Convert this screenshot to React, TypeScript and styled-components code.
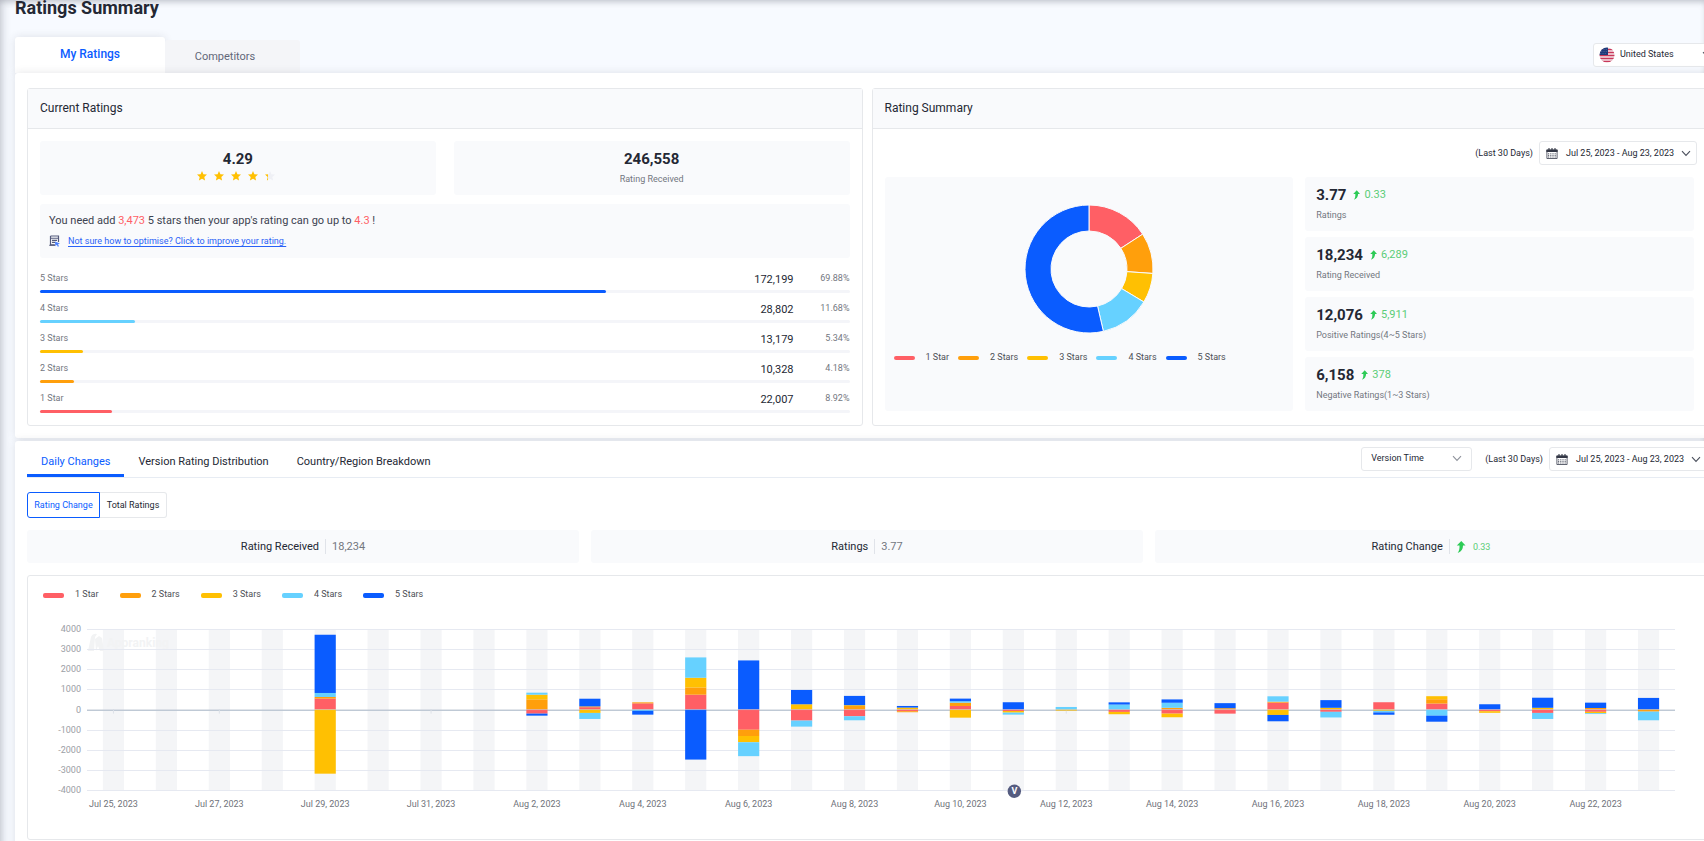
import React from "react";
import styled, { createGlobalStyle } from "styled-components";

const COLORS = {
  red: "#ff5f65",
  orange: "#ff9f0c",
  yellow: "#ffc002",
  cyan: "#66d1ff",
  blue: "#0a5cff",
  ink: "#242834",
  text: "#3c4250",
  muted: "#73777f",
  soft: "#f9fafc",
  line: "#e6e8eb",
  green: "#2dcb56",
};

const GlobalStyle = createGlobalStyle`
  *, *::before, *::after { box-sizing: border-box; }
  html { overflow: hidden; }
  body {
    margin: 0;
    background: #f7faff;
    color: ${COLORS.ink};
    font-family: Roboto, "Liberation Sans", sans-serif;
    font-size: 9px;
    line-height: 14px;
  }
  button, select { font: inherit; color: inherit; }
  h1, h2, p, ul { margin: 0; padding: 0; font-weight: inherit; }
  svg { flex: none; }
`;

const Page = styled.div`
  min-height: 100vh;
  padding-left: 15px;
  overflow: hidden;
  box-shadow: inset 5px 0 9px -2px rgba(40, 44, 60, 0.18), inset 0 4px 6px -2px rgba(40, 44, 60, 0.2);
`;

const Content = styled.main`
  margin-right: -15px;
`;

const Title = styled.h1`
  font-size: 18px;
  line-height: 16px;
  font-weight: 700;
`;

const TopBar = styled.div`
  display: flex;
  align-items: flex-end;
  height: 57px;
`;

const MainTab = styled.button<{ $active?: boolean }>`
  border: 0;
  cursor: pointer;
  width: ${(p) => (p.$active ? 150 : 135)}px;
  height: ${(p) => (p.$active ? 36 : 33)}px;
  padding: ${(p) => (p.$active ? "0 0 2px" : "0 15px 0 0")};
  border-radius: 3px 3px 0 0;
  background: ${(p) => (p.$active ? "#fff" : "#f4f5f8")};
  color: ${(p) => (p.$active ? COLORS.blue : "#626779")};
  font-size: ${(p) => (p.$active ? 12 : 11)}px;
  font-weight: ${(p) => (p.$active ? 500 : 400)};
  box-shadow: ${(p) => (p.$active ? "0 0 8px rgba(40, 44, 60, 0.12)" : "none")};
`;

const Spacer = styled.div`
  flex: 1;
`;

const SelectBox = styled.div<{ $width: number }>`
  position: relative;
  width: ${(p) => p.$width}px;
  height: 24px;
  & > svg {
    position: absolute;
    top: 8px;
    right: 10px;
    pointer-events: none;
  }
`;

const Select = styled.select<{ $indent: number }>`
  appearance: none;
  width: 100%;
  height: 24px;
  padding: 0 0 2px ${(p) => p.$indent}px;
  border: 1px solid ${COLORS.line};
  border-radius: 3px;
  background: #fff;
`;

const FlagSlot = styled.span`
  position: absolute;
  top: 4px;
  left: 6px;
  width: 16px;
  height: 16px;
  pointer-events: none;
`;

const CountrySlot = styled.div`
  margin: 0 -3px 6px 0;
`;

const Panel = styled.section<{ $top: number }>`
  position: relative;
  background: #fff;
  border-radius: 3px;
  padding: ${(p) => p.$top}px 12px 12px;
  box-shadow: 0 0 8px rgba(40, 44, 60, 0.12);
`;

const PanelStack = styled.div`
  display: grid;
  gap: 3px;
`;

const TwoCards = styled.div`
  display: grid;
  grid-template-columns: 1fr 1fr;
  gap: 9px;
`;

const Card = styled.section`
  border: 1px solid ${COLORS.line};
  border-radius: 3px;
`;

const CardHead = styled.h2`
  height: 40px;
  padding: 0 12px;
  border-bottom: 1px solid ${COLORS.line};
  background: ${COLORS.soft};
  font-size: 12px;
  line-height: 38px;
`;

const CardBody = styled.div`
  padding: 12px;
`;

const SoftBox = styled.div`
  background: ${COLORS.soft};
  border-radius: 3px;
`;

const ScorePair = styled.div`
  display: grid;
  grid-template-columns: 1fr 1fr;
  gap: 18px;
`;

const Score = styled(SoftBox)`
  height: 54px;
  display: flex;
  flex-direction: column;
  align-items: center;
  gap: 3px;
  padding-top: 9px;
  line-height: 16px;
`;

const Big = styled.strong`
  font-size: 15px;
  line-height: 18px;
  font-weight: 700;
`;

const Label = styled.span`
  color: ${COLORS.muted};
`;

const StarRow = styled.div`
  display: flex;
  gap: 7px;
  height: 10px;
  padding-right: 4px;
`;

const Note = styled(SoftBox)`
  height: 54px;
  margin: 9px 0 5px;
  padding: 9px;
`;

const NoteText = styled.p`
  font-size: 11px;
  line-height: 16px;
  color: ${COLORS.text};
  em {
    color: ${COLORS.red};
    font-style: normal;
  }
`;

const NoteLine = styled.div`
  display: flex;
  align-items: center;
  gap: 8px;
  height: 20px;
  padding-top: 4px;
  a {
    color: #2b62f7;
    text-underline-offset: 2px;
  }
`;

const BarHead = styled.div`
  display: grid;
  grid-template-columns: 1fr auto 56px;
  align-items: center;
  height: 27px;
  padding-top: 3px;
  color: ${COLORS.muted};
  & > span:last-child {
    text-align: right;
  }
`;

const Count = styled.span`
  padding-top: 3px;
  font-size: 11px;
  color: ${COLORS.ink};
`;

const Track = styled.div`
  height: 3px;
  border-radius: 2px;
  background: #f4f5f9;
`;

const Fill = styled.div<{ $color: string }>`
  height: 3px;
  border-radius: 2px;
  background: ${(p) => p.$color};
`;

const DateRow = styled.div`
  display: flex;
  align-items: center;
  gap: 6px;
  height: 24px;
  white-space: nowrap;
`;

const DateButton = styled.button`
  display: flex;
  align-items: center;
  width: 158px;
  height: 24px;
  padding: 0 5px 0 6px;
  border: 1px solid ${COLORS.line};
  border-radius: 3px;
  background: #fff;
  cursor: pointer;
  span {
    flex: 1;
    padding-left: 8px;
    text-align: left;
  }
`;

const SummaryHead = styled.div`
  display: flex;
  justify-content: flex-end;
  margin: 0 -3px 12px;
`;

const SummaryGrid = styled.div`
  display: grid;
  grid-template-columns: 41fr 39fr;
  gap: 12px;
`;

const DonutBox = styled(SoftBox)`
  display: flex;
  flex-direction: column;
  align-items: center;
  gap: 16px;
  padding: 27px 9px 0;
`;

const Legend = styled.ul<{ $gap: number }>`
  display: flex;
  align-self: flex-start;
  gap: ${(p) => p.$gap}px;
  list-style: none;
  color: #4c4f55;
`;

const LegendItem = styled.li<{ $color: string; $height: number }>`
  display: flex;
  align-items: center;
  gap: 11px;
  &::before {
    content: "";
    width: 21px;
    height: ${(p) => p.$height}px;
    margin-top: 2px;
    border-radius: 2px;
    background: ${(p) => p.$color};
  }
`;

const StatList = styled.div`
  display: grid;
  gap: 6px;
`;

const Stat = styled(SoftBox)`
  height: 54px;
  padding: 9px 11px 0;
`;

const StatTop = styled.div`
  display: flex;
  align-items: center;
  gap: 7px;
  margin-bottom: 4px;
`;

const Delta = styled.span`
  display: flex;
  align-items: center;
  gap: 4px;
  font-size: 11px;
  color: #5bcd77;
`;

const TabBar = styled.div`
  display: flex;
  justify-content: space-between;
  height: 37px;
  border-bottom: 1px solid #e7ecf3;
`;

const TabGroup = styled.nav`
  display: flex;
`;

const SubTab = styled.button<{ $active?: boolean }>`
  height: 36px;
  padding: 9px 14px 0;
  border: 0;
  border-bottom: 3px solid ${(p) => (p.$active ? COLORS.blue : "transparent")};
  background: none;
  font-size: 11px;
  line-height: 16px;
  color: ${(p) => (p.$active ? COLORS.blue : COLORS.ink)};
  cursor: pointer;
`;

const Controls = styled.div`
  display: flex;
  gap: 13px;
  padding-top: 6px;
`;

const Toggle = styled.div`
  display: flex;
  margin: 14px 0 12px;
`;

const ToggleButton = styled.button<{ $active?: boolean }>`
  height: 26px;
  width: ${(p) => (p.$active ? 73 : 67)}px;
  padding: 0;
  border: 1px solid ${(p) => (p.$active ? COLORS.blue : COLORS.line)};
  border-left-width: ${(p) => (p.$active ? 1 : 0)}px;
  border-radius: ${(p) => (p.$active ? "3px 0 0 3px" : "0 3px 3px 0")};
  background: #fff;
  color: ${(p) => (p.$active ? COLORS.blue : COLORS.ink)};
  cursor: pointer;
`;

const Strip = styled.div`
  display: grid;
  grid-template-columns: repeat(3, 1fr);
  gap: 12px;
  margin-bottom: 12px;
`;

const StripCell = styled(SoftBox)`
  display: flex;
  align-items: center;
  justify-content: center;
  height: 33px;
  font-size: 11px;
`;

const StripValue = styled.span`
  display: flex;
  align-items: center;
  gap: 7px;
  height: 15px;
  margin-left: 6px;
  padding-left: 6px;
  border-left: 1px solid #e0e3e9;
  color: ${COLORS.muted};
`;

const StripDelta = styled.span`
  font-size: 9px;
  color: #5bcd77;
`;

const ChartCard = styled(Card)`
  height: 265px;
  padding: 11px 31px 0 15px;
`;

const Plot = styled.div`
  margin-left: 44px;
  & > svg {
    display: block;
    width: 100%;
    height: 220px;
    overflow: visible;
  }
`;

const Chevron = ({ color = "#4a4f5c" }: { color?: string }) => (
  <svg width="10" height="7" viewBox="0 0 10 7" fill="none" stroke={color} strokeWidth="1.1" aria-hidden="true">
    <path d="M1 1.200 5 5.400 9 1.200" />
  </svg>
);

const Calendar = () => (
  <svg width="12" height="11" viewBox="0 0 12 11" aria-hidden="true">
    <path d="M.9 2h10.200v8.500H.9z" fill="#fff" stroke="#4d5160" strokeWidth=".9" />
    <path d="M.4 1.600h11.200V4H.4z" fill="#343846" />
    <path d="M3 0v2.600M6 0v2.600M9 0v2.600" stroke="#343846" strokeWidth="1.100" />
    <path d="M2 5.800h8M2 7.400h8M2 9h8" stroke="#5c606e" strokeWidth="1" strokeDasharray="1.200 1" />
  </svg>
);

const UpArrow = ({ size = 10 }: { size?: number }) => (
  <svg width={size === 10 ? 7 : 10} height={size} viewBox="0 0 9 12" aria-hidden="true">
    <path d="M4.800 0 9 4.600H6.500C6.500 8 5 10.600 1.200 12 2.800 9.800 3.100 7.800 3 4.600H.3z" fill={COLORS.green} />
  </svg>
);

const STAR = "M5 0 6.400 3.300 10 3.600 7.300 6 8.100 9.600 5 7.700 1.900 9.600 2.700 6 0 3.600 3.600 3.300z";

const Star = ({ partial }: { partial?: boolean }) => (
  <svg width="10" height="10" viewBox="0 0 10 10" aria-hidden="true">
    <defs>
      <linearGradient id="partial">
        <stop offset=".29" stopColor={COLORS.yellow} />
        <stop offset=".29" stopColor="#eff0f5" />
      </linearGradient>
    </defs>
    <path d={STAR} fill={partial ? "url(#partial)" : COLORS.yellow} />
  </svg>
);

const NoteIcon = () => (
  <svg width="11" height="12" viewBox="0 0 11 12" fill="none" aria-hidden="true">
    <path d="M1.500 1h8v6M1.500 1v8.800h4.300" stroke="#555b7c" strokeWidth="1.200" />
    <path d="M1.500 3.300h8M3 5.400h5M3 7.400h3.200" stroke="#555b7c" strokeWidth="1.100" />
    <path d="M.3 10.300h5.700" stroke="#555b7c" strokeWidth="1.100" />
    <path d="m6 6.500 5 2.100-2 .7 1 2-1.200.5-1-2-1.500 1.400z" fill="#4e83ff" />
  </svg>
);

const Flag = () => (
  <svg width="16" height="16" viewBox="0 0 16 16" aria-hidden="true">
    <clipPath id="round"><circle cx="8" cy="8" r="7.500" /></clipPath>
    <g clipPath="url(#round)">
      <rect width="16" height="16" fill="#f3e6ea" />
      <path d="M0 2.500h16M0 5.500h16M0 8.500h16M0 11.500h16M0 14.500h16" stroke="#c9385a" strokeWidth="1.500" />
      <rect width="9" height="8" fill="#1d3a7a" />
      <path d="M2 2.500h6M2 4.500h6M1 6.500h7" stroke="#7d90bb" strokeWidth=".6" strokeDasharray=".6 1.200" />
    </g>
  </svg>
);

const BARS = [
  { label: "5 Stars", count: "172,199", pct: 69.88, color: COLORS.blue },
  { label: "4 Stars", count: "28,802", pct: 11.68, color: COLORS.cyan },
  { label: "3 Stars", count: "13,179", pct: 5.34, color: COLORS.yellow },
  { label: "2 Stars", count: "10,328", pct: 4.18, color: COLORS.orange },
  { label: "1 Star", count: "22,007", pct: 8.92, color: COLORS.red },
];

const LEGEND = [...BARS].reverse();

const STATS = [
  { value: "3.77", delta: "0.33", label: "Ratings" },
  { value: "18,234", delta: "6,289", label: "Rating Received" },
  { value: "12,076", delta: "5,911", label: "Positive Ratings(4~5 Stars)" },
  { value: "6,158", delta: "378", label: "Negative Ratings(1~3 Stars)" },
];

const ChartLegend = ({ gap, height }: { gap: number; height: number }) => (
  <Legend $gap={gap}>
    {LEGEND.map((l) => (
      <LegendItem key={l.label} $color={l.color} $height={height}>{l.label}</LegendItem>
    ))}
  </Legend>
);

const DateRange = () => (
  <DateRow>
    <span>(Last 30 Days)</span>
    <DateButton type="button">
      <Calendar />
      <span>Jul 25, 2023 - Aug 23, 2023</span>
      <Chevron />
    </DateButton>
  </DateRow>
);

/* Ring slices, as the angle in degrees where each one ends. */
const SLICES: [number, string][] = [
  [57, COLORS.red],
  [94, COLORS.orange],
  [121, COLORS.yellow],
  [167, COLORS.cyan],
  [360, COLORS.blue],
];

const Donut = () => {
  const point = (deg: number, r: number) => {
    const a = (deg * Math.PI) / 180;
    return `${65 + r * Math.sin(a)} ${65 - r * Math.cos(a)}`;
  };
  let from = 0;
  return (
    <svg width="130" height="130" viewBox="0 0 130 130" role="img" aria-label="Share of ratings by stars">
      {SLICES.map(([to, color]) => {
        const large = to - from > 180 ? 1 : 0;
        const d = `M${point(from, 64)}A64 64 0 ${large} 1 ${point(to, 64)}L${point(to, 38)}A38 38 0 ${large} 0 ${point(from, 38)}z`;
        from = to;
        return <path key={color} d={d} fill={color} stroke={COLORS.soft} strokeWidth="1" />;
      })}
    </svg>
  );
};

type Stack = [keyof typeof COLORS, number][];

/* Daily change per star level: gains stack above zero, losses below. */
const DAYS: Record<number, [Stack, Stack]> = {
  4: [[["red", 545], ["orange", 80], ["cyan", 200], ["blue", 2890]], [["yellow", 3180]]],
  8: [[["orange", 510], ["yellow", 230], ["cyan", 100]], [["red", 200], ["blue", 100]]],
  9: [[["red", 120], ["orange", 40], ["blue", 380]], [["yellow", 165], ["cyan", 300]]],
  10: [[["red", 310], ["orange", 50]], [["cyan", 60], ["blue", 190]]],
  11: [[["red", 740], ["orange", 360], ["yellow", 480], ["cyan", 1010]], [["blue", 2480]]],
  12: [[["blue", 2440]], [["red", 1000], ["orange", 310], ["yellow", 310], ["cyan", 690]]],
  13: [[["yellow", 265], ["blue", 710]], [["red", 545], ["cyan", 300]]],
  14: [[["orange", 180], ["yellow", 40], ["blue", 460]], [["red", 330], ["cyan", 200]]],
  15: [[["yellow", 100], ["blue", 80]], [["red", 80], ["orange", 50]]],
  16: [[["red", 180], ["orange", 165], ["cyan", 70], ["blue", 130]], [["yellow", 400]]],
  17: [[["blue", 365]], [["red", 70], ["yellow", 80], ["cyan", 100]]],
  18: [[["cyan", 130]], [["yellow", 50]]],
  19: [[["cyan", 250], ["blue", 110]], [["red", 115], ["yellow", 115]]],
  20: [[["orange", 90], ["cyan", 250], ["blue", 165]], [["red", 200], ["yellow", 180]]],
  21: [[["orange", 70], ["blue", 250]], [["red", 200]]],
  22: [[["red", 345], ["orange", 50], ["cyan", 265]], [["yellow", 265], ["blue", 315]]],
  23: [[["yellow", 90], ["blue", 380]], [["red", 110], ["cyan", 280]]],
  24: [[["red", 365]], [["yellow", 60], ["cyan", 80], ["blue", 115]]],
  25: [[["red", 300], ["orange", 215], ["yellow", 150]], [["cyan", 300], ["blue", 300]]],
  26: [[["blue", 265]], [["red", 80], ["yellow", 80]]],
  27: [[["yellow", 90], ["blue", 500]], [["red", 165], ["cyan", 300]]],
  28: [[["orange", 80], ["blue", 265]], [["red", 110], ["yellow", 70], ["cyan", 40]]],
  29: [[["blue", 580]], [["orange", 100], ["cyan", 430]]],
};

const TOP = 28;
const STEP = 20.15;
const ZERO = TOP + STEP * 4;
const COL = 100 / 30;

const segments = (stack: Stack, up: boolean) => {
  let y = ZERO;
  return stack.map(([color, value]) => {
    const h = (value / 1000) * STEP;
    if (up) y -= h;
    const seg = { color: COLORS[color], y, h };
    if (!up) y += h;
    return seg;
  });
};

const DailyChart = () => (
  <svg role="img" aria-label="Daily rating changes">
    {Array.from({ length: 30 }, (_, i) => (
      <rect key={i} x={`${COL * (i + 0.3)}%`} y={TOP} width={`${COL * 0.4}%`} height={STEP * 8} fill="#f4f5f7" />
    ))}
    <g fill="#f2f3f4">
      <path d="M1 50 4 36q2-4 6-3l-2 3-1 14zM9 50 8 38l4-3 3 2 2 13h-4l-2-5z" />
      <text x="20" y="46" fontSize="12" fontWeight="700">Appranking</text>
    </g>
    {Array.from({ length: 9 }, (_, i) => {
      const y = Math.round(TOP + STEP * i) + 0.5;
      return (
        <g key={i}>
          <line x1="0" x2="100%" y1={y} y2={y} stroke={i === 4 ? "#bfcad6" : "#e6e9f1"} />
          <text x="-6" y={y + 2} textAnchor="end" fontSize="9" fill="#9b9ea5">{4000 - i * 1000}</text>
        </g>
      );
    })}
    {[0, 2, 6, 18].map((i) => (
      <line key={i} x1={`${COL * (i + 0.5)}%`} x2={`${COL * (i + 0.5)}%`} y1={ZERO} y2={ZERO + 4} stroke="#dde1e8" />
    ))}
    {Object.entries(DAYS).map(([day, [gain, loss]]) =>
      [...segments(gain, true), ...segments(loss, false)].map((s, k) => (
        <rect
          key={`${day}-${k}`}
          x={`${COL * (Number(day) + 0.3)}%`}
          y={s.y}
          width={`${COL * 0.4}%`}
          height={s.h}
          fill={s.color}
        />
      ))
    )}
    <line x1="0" x2="100%" y1={ZERO} y2={ZERO} stroke="#bfcad6" strokeOpacity=".5" />
    {Array.from({ length: 15 }, (_, k) => {
      const day = 25 + k * 2;
      const label = day <= 31 ? `Jul ${day}, 2023` : `Aug ${day - 31}, 2023`;
      return (
        <text key={k} x={`${COL * (k * 2 + 0.5)}%`} y={TOP + 178} textAnchor="middle" fontSize="9" fill="#6f727a">
          {label}
        </text>
      );
    })}
    <svg x={`${COL * 17.5}%`} y={TOP + STEP * 8} overflow="visible">
      <circle cx="1" cy="1" r="6.700" fill="#555c80" />
      <text x="1" y="4" textAnchor="middle" fontSize="9" fontWeight="700" fill="#fff">V</text>
    </svg>
  </svg>
);

export default function App() {
  return (
    <Page>
      <GlobalStyle />
      <Content>
        <Title>Ratings Summary</Title>
        <TopBar>
          <MainTab type="button" $active>My Ratings</MainTab>
          <MainTab type="button">Competitors</MainTab>
          <Spacer />
          <CountrySlot>
            <SelectBox $width={129}>
              <Select $indent={26} aria-label="Country">
                <option>United States</option>
              </Select>
              <FlagSlot><Flag /></FlagSlot>
              <Chevron />
            </SelectBox>
          </CountrySlot>
        </TopBar>
        <PanelStack>
          <Panel $top={15}>
            <TwoCards>
              <Card>
                <CardHead>Current Ratings</CardHead>
                <CardBody>
                  <ScorePair>
                    <Score>
                      <Big>4.29</Big>
                      <StarRow>
                        <Star /><Star /><Star /><Star /><Star partial />
                      </StarRow>
                    </Score>
                    <Score>
                      <Big>246,558</Big>
                      <Label>Rating Received</Label>
                    </Score>
                  </ScorePair>
                  <Note>
                    <NoteText>
                      You need add <em>3,473</em> 5 stars then your app's rating can go up to <em>4.3</em> !
                    </NoteText>
                    <NoteLine>
                      <NoteIcon />
                      <a href="#improve">Not sure how to optimise? Click to improve your rating.</a>
                    </NoteLine>
                  </Note>
                  {BARS.map((b) => (
                    <div key={b.label}>
                      <BarHead>
                        <span>{b.label}</span>
                        <Count>{b.count}</Count>
                        <span>{b.pct}%</span>
                      </BarHead>
                      <Track>
                        <Fill $color={b.color} style={{ width: `${b.pct}%` }} />
                      </Track>
                    </div>
                  ))}
                </CardBody>
              </Card>
              <Card>
                <CardHead>Rating Summary</CardHead>
                <CardBody>
                  <SummaryHead><DateRange /></SummaryHead>
                  <SummaryGrid>
                    <DonutBox>
                      <Donut />
                      <ChartLegend gap={9} height={4} />
                    </DonutBox>
                    <StatList>
                      {STATS.map((s) => (
                        <Stat key={s.label}>
                          <StatTop>
                            <Big>{s.value}</Big>
                            <Delta><UpArrow />{s.delta}</Delta>
                          </StatTop>
                          <Label>{s.label}</Label>
                        </Stat>
                      ))}
                    </StatList>
                  </SummaryGrid>
                </CardBody>
              </Card>
            </TwoCards>
          </Panel>
          <Panel $top={0}>
            <TabBar>
              <TabGroup>
                <SubTab type="button" $active>Daily Changes</SubTab>
                <SubTab type="button">Version Rating Distribution</SubTab>
                <SubTab type="button">Country/Region Breakdown</SubTab>
              </TabGroup>
              <Controls>
                <SelectBox $width={111}>
                  <Select $indent={9} aria-label="Version order">
                    <option>Version Time</option>
                  </Select>
                  <Chevron color="#8f939c" />
                </SelectBox>
                <DateRange />
              </Controls>
            </TabBar>
            <Toggle>
              <ToggleButton type="button" $active>Rating Change</ToggleButton>
              <ToggleButton type="button">Total Ratings</ToggleButton>
            </Toggle>
            <Strip>
              <StripCell>Rating Received<StripValue>18,234</StripValue></StripCell>
              <StripCell>Ratings<StripValue>3.77</StripValue></StripCell>
              <StripCell>
                Rating Change
                <StripValue><UpArrow size={12} /><StripDelta>0.33</StripDelta></StripValue>
              </StripCell>
            </Strip>
            <ChartCard>
              <ChartLegend gap={21} height={5} />
              <Plot><DailyChart /></Plot>
            </ChartCard>
          </Panel>
        </PanelStack>
      </Content>
    </Page>
  );
}
